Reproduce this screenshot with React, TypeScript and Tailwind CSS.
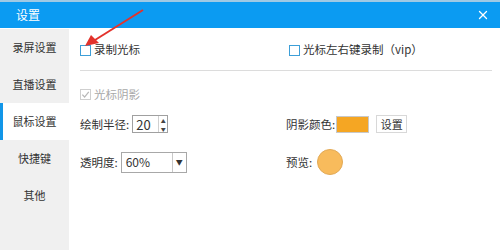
import { X } from 'lucide-react';

const navItems = ['录屏设置', '直播设置', '鼠标设置', '快捷键', '其他'];
const activeNav = '鼠标设置';

const font = { fontFamily: '"Noto Sans CJK SC", "Noto Sans", sans-serif' };

function CheckBox({ checked = false, disabled = false }: { checked?: boolean; disabled?: boolean }) {
  return (
    <span
      className={`flex h-[11px] w-[11px] shrink-0 items-center justify-center border bg-white ${
        disabled ? 'border-[#cfcfcf]' : 'border-[#3d9fd8]'
      }`}
    >
      {checked && (
        <svg viewBox="0 0 10 10" className="h-[9px] w-[9px]">
          <path d="M1.5 5.2 L4 7.8 L8.6 2" fill="none" stroke="#b8b8b8" strokeWidth="1.4" />
        </svg>
      )}
    </span>
  );
}

export default function App() {
  return (
    <div style={font} className="relative h-[250px] w-[500px] overflow-hidden bg-white text-[11.5px] text-[#333]">
      <div className="h-[2px] bg-[#9fc9e4]" />
      <div className="flex h-[26px] items-center justify-between bg-[#0b9bf2] pl-[16px] pr-[10px] text-white">
        <span className="text-[12px]">设置</span>
        <X className="h-[14px] w-[14px]" strokeWidth={2.2} />
      </div>
      <div className="h-px bg-white" />

      <div className="flex h-[221px]">
        <nav className="w-[69px] shrink-0 bg-[#f0f0f0]">
          {navItems.map((item) => (
            <div
              key={item}
              className={`relative flex h-[37px] items-center justify-center text-[11px] ${
                item === activeNav ? 'bg-white' : ''
              }`}
            >
              {item === activeNav && <span className="absolute bottom-0 left-0 top-0 w-[3px] bg-[#1296e8]" />}
              {item}
            </div>
          ))}
        </nav>

        <main className="flex-1 pl-[11px] pr-[8px]">
          <div className="flex h-[41px] items-center pt-[1px]">
            <label className="flex w-[209px] items-center gap-[3px]">
              <CheckBox />
              <span>录制光标</span>
            </label>
            <label className="flex items-center gap-[3px]">
              <CheckBox />
              <span>光标左右键录制（vip）</span>
            </label>
          </div>
          <div className="h-px bg-[#dcdcdc]" />

          <div className="mt-[15px] flex items-center gap-[3px] text-[#a8a8a8]">
            <CheckBox checked disabled />
            <span>光标阴影</span>
          </div>

          <div className="mt-[12px] flex h-[18px] items-center">
            <div className="flex w-[206px] items-center">
              <span>绘制半径:</span>
              <div className="ml-[3px] flex h-[18px] w-[36px] items-center border border-[#a0a0a0] bg-white">
                <span className="flex-1 pl-[3px] text-[13px]">20</span>
                <div className="flex h-full w-[9px] flex-col border-l border-[#d0d0d0]">
                  <span className="flex flex-1 items-center justify-center text-[5px] leading-none text-[#444]">▲</span>
                  <span className="flex flex-1 items-center justify-center text-[5px] leading-none text-[#444]">▼</span>
                </div>
              </div>
            </div>
            <span>阴影颜色:</span>
            <span className="ml-[1px] h-[17px] w-[33px] border border-[#c8c8c8] bg-[#f5a623]" />
            <button className="ml-[7px] h-[18px] w-[31px] border border-[#d8d8d8] bg-white text-[11px]">设置</button>
          </div>

          <div className="mt-[16px] flex h-[26px] items-center">
            <div className="flex w-[206px] items-center">
              <span>透明度:</span>
              <div className="ml-[3px] flex h-[21px] w-[66px] items-center border border-[#a8a8a8] bg-white">
                <span className="flex-1 pl-[4px] text-[12px]">60%</span>
                <span className="flex h-full w-[14px] items-center justify-center border-l border-[#c8c8c8] text-[7px] text-[#333]">
                  ▼
                </span>
              </div>
            </div>
            <span>预览:</span>
            <span className="ml-[5px] h-[26px] w-[26px] rounded-full border border-[#e2a955] bg-[#f8bb5c]" />
          </div>
        </main>
      </div>

      <svg className="pointer-events-none absolute left-0 top-0" width="500" height="250">
        <line x1="143" y1="10" x2="95" y2="40" stroke="#e3322b" strokeWidth="2" />
        <polygon points="85,46 91,35 99,43" fill="#e3322b" />
      </svg>
    </div>
  );
}
